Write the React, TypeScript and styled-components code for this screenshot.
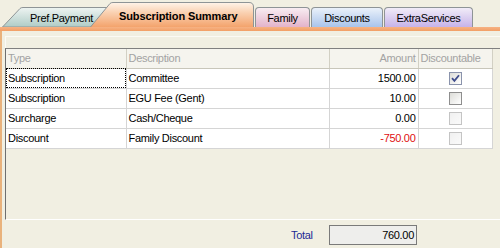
import styled, { createGlobalStyle } from 'styled-components';

const GlobalStyle = createGlobalStyle`
  html, body {
    margin: 0;
    padding: 0;
    background: #F1EFE2;
  }
  body {
    font-family: "Liberation Sans", Arial, sans-serif;
    font-size: 11px;
    letter-spacing: -0.3px;
    color: #000;
  }
`;

const Frame = styled.div`
  width: 500px;
  height: 248px;
  display: flex;
  flex-direction: column;
  background: #F1EFE2;
  overflow: hidden;
`;

const TabStrip = styled.div`
  height: 27px;
  display: flex;
  align-items: flex-end;
  padding-left: 2px;
  background: #F1EFE2;
`;

interface SlantTabProps {
  $w: number;
  $h: number;
  $offset: number;
  $z: number;
  $pad: number;
}

const SlantTab = styled.div<SlantTabProps>`
  position: relative;
  width: ${p => p.$w}px;
  height: ${p => p.$h}px;
  margin-left: ${p => p.$offset}px;
  z-index: ${p => p.$z};
  flex-shrink: 0;
  display: flex;
  align-items: center;
  padding-left: ${p => p.$pad}px;
  box-sizing: border-box;
  svg {
    position: absolute;
    left: 0;
    top: 0;
  }
`;

const TabText = styled.span<{ $bold?: boolean }>`
  position: relative;
  font-weight: ${p => (p.$bold ? 700 : 400)};
  letter-spacing: ${p => (p.$bold ? '-0.1px' : '-0.3px')};
  white-space: nowrap;
  padding-top: ${p => (p.$bold ? 2 : 1)}px;
`;

interface RoundTabProps {
  $w: number;
  $top: string;
  $bottom: string;
}

const RoundTab = styled.div<RoundTabProps>`
  width: ${p => p.$w}px;
  height: 20px;
  margin-left: 1px;
  flex-shrink: 0;
  box-sizing: border-box;
  border: 1px solid #8E9496;
  border-bottom: none;
  border-radius: 4px 4px 0 0;
  background: linear-gradient(${p => p.$top}, ${p => p.$bottom});
  display: flex;
  align-items: center;
  justify-content: center;
  padding-top: 1px;
  white-space: nowrap;
`;

const Band = styled.div`
  height: 4px;
  background: linear-gradient(#F6B284, #F29F66);
  position: relative;
  z-index: 3;
`;

const Page = styled.div`
  flex: 1;
  display: flex;
  flex-direction: column;
  border-left: 2px solid #E9B27C;
  background: #F1EFE2;
`;

const Panel = styled.div`
  margin-top: 5px;
  margin-left: 3px;
  border-top: 1px solid #FBFAF5;
  border-left: 1px solid #FBFAF5;
  padding-top: 11px;
  display: flex;
  flex-direction: column;
`;

const GridBox = styled.div`
  height: 170px;
  border-top: 1px solid #808080;
  border-left: 1px solid #6F6F6F;
  border-bottom: 1px solid #FFFFFF;
  margin-left: -1px;
  background: #F1EFE2;
`;

const Table = styled.table`
  border-collapse: collapse;
  table-layout: fixed;
  width: 486px;
`;

const HeadCell = styled.th<{ $w: number; $right?: boolean }>`
  width: ${p => p.$w}px;
  height: 19px;
  padding: 0 2px;
  font-weight: 400;
  color: #A3A3A3;
  text-align: ${p => (p.$right ? 'right' : 'left')};
  background: #F5F4EE;
  border-right: 1px solid #D2D0C4;
  border-bottom: 1px solid #C8C6BA;
  white-space: nowrap;
  overflow: hidden;
  box-sizing: border-box;
`;

const BodyRow = styled.tr`
  height: 20px;
`;

const Cell = styled.td<{ $right?: boolean; $red?: boolean; $focus?: boolean; $center?: boolean }>`
  height: 20px;
  padding: 0 2px;
  text-align: ${p => (p.$right ? 'right' : p.$center ? 'center' : 'left')};
  color: ${p => (p.$red ? '#E01010' : '#000')};
  background: #FFFFFF;
  border-right: 1px solid #D5D5D5;
  border-bottom: 1px solid #D5D5D5;
  outline: ${p => (p.$focus ? '1px dotted #000' : 'none')};
  outline-offset: -1px;
  white-space: nowrap;
  overflow: hidden;
  box-sizing: border-box;
  vertical-align: middle;
`;

type BoxState = 'checked' | 'empty' | 'disabled';

const CheckBox = styled.span<{ $state: BoxState }>`
  display: inline-flex;
  align-items: center;
  justify-content: center;
  width: 13px;
  height: 13px;
  box-sizing: border-box;
  vertical-align: middle;
  margin-top: -1px;
  border: 1px solid ${p => (p.$state === 'disabled' ? '#C4C4C4' : p.$state === 'checked' ? '#8A93AC' : '#8E8E8E')};
  background: ${p =>
    p.$state === 'disabled'
      ? 'linear-gradient(135deg, #F0F0F0, #FAFAFA)'
      : 'linear-gradient(135deg, #DCDCD8, #FFFFFF)'};
`;

const Footer = styled.div`
  flex: 1;
  display: flex;
  align-items: center;
  padding-left: 289px;
`;

const TotalLabel = styled.span`
  width: 38px;
  color: #1C2A94;
  padding-top: 1px;
`;

const TotalBox = styled.div`
  width: 88px;
  height: 20px;
  box-sizing: border-box;
  border: 1px solid #7A7A7A;
  background: #EEEEEC;
  display: flex;
  align-items: center;
  justify-content: flex-end;
  padding-right: 2px;
  margin-top: 1px;
`;

interface Row {
  type: string;
  description: string;
  amount: string;
  box: BoxState;
}

const rows: Row[] = [
  { type: 'Subscription', description: 'Committee', amount: '1500.00', box: 'checked' },
  { type: 'Subscription', description: 'EGU Fee (Gent)', amount: '10.00', box: 'empty' },
  { type: 'Surcharge', description: 'Cash/Cheque', amount: '0.00', box: 'disabled' },
  { type: 'Discount', description: 'Family Discount', amount: '-750.00', box: 'disabled' },
];

const App = () => {
  return (
    <Frame>
      <GlobalStyle />
      <TabStrip>
        <SlantTab $w={110} $h={20} $offset={0} $z={1} $pad={28}>
          <svg width="110" height="20" viewBox="0 0 110 20">
            <defs>
              <linearGradient id="gPref" x1="0" y1="0" x2="0" y2="1">
                <stop offset="0" stopColor="#EEF4F2" />
                <stop offset="1" stopColor="#AFCCC6" />
              </linearGradient>
            </defs>
            <path d="M0.5 20 L18 1.5 Q19 0.5 21 0.5 L106 0.5 Q109.5 0.5 109.5 4 L109.5 20 Z" fill="url(#gPref)" stroke="#8E9496" />
          </svg>
          <TabText>Pref.Payment</TabText>
        </SlantTab>
        <SlantTab $w={164} $h={25} $offset={-22} $z={2} $pad={29}>
          <svg width="164" height="25" viewBox="0 0 164 25">
            <defs>
              <linearGradient id="gSel" x1="0" y1="0" x2="0" y2="1">
                <stop offset="0" stopColor="#FFF4EA" />
                <stop offset="0.4" stopColor="#FAD2B3" />
                <stop offset="1" stopColor="#F3A36C" />
              </linearGradient>
            </defs>
            <path d="M0.5 25 L20 1.5 Q21 0.5 23 0.5 L159 0.5 Q163.5 0.5 163.5 5 L163.5 25" fill="url(#gSel)" stroke="#8E9496" />
          </svg>
          <TabText $bold>Subscription Summary</TabText>
        </SlantTab>
        <RoundTab $w={55} $top="#F8EDF2" $bottom="#E3B3CA">Family</RoundTab>
        <RoundTab $w={72} $top="#EAF1FA" $bottom="#A9C4EB">Discounts</RoundTab>
        <RoundTab $w={89} $top="#F1ECF8" $bottom="#C6B3E9">ExtraServices</RoundTab>
      </TabStrip>
      <Band />
      <Page>
        <Panel>
          <GridBox>
            <Table>
              <thead>
                <tr>
                  <HeadCell $w={120}>Type</HeadCell>
                  <HeadCell $w={203}>Description</HeadCell>
                  <HeadCell $w={89} $right>Amount</HeadCell>
                  <HeadCell $w={74}>Discountable</HeadCell>
                </tr>
              </thead>
              <tbody>
                {rows.map((r, i) => (
                  <BodyRow key={i}>
                    <Cell $focus={i === 0}>{r.type}</Cell>
                    <Cell>{r.description}</Cell>
                    <Cell $right $red={r.amount.startsWith('-')}>{r.amount}</Cell>
                    <Cell $center>
                      <CheckBox $state={r.box}>
                        {r.box === 'checked' && (
                          <svg width="9" height="9" viewBox="0 0 9 9">
                            <path d="M1 4.2 L3.4 6.8 L8 1.2" fill="none" stroke="#3F4C8C" strokeWidth="1.8" />
                          </svg>
                        )}
                      </CheckBox>
                    </Cell>
                  </BodyRow>
                ))}
              </tbody>
            </Table>
          </GridBox>
        </Panel>
        <Footer>
          <TotalLabel>Total</TotalLabel>
          <TotalBox>760.00</TotalBox>
        </Footer>
      </Page>
    </Frame>
  );
};

export default App;
